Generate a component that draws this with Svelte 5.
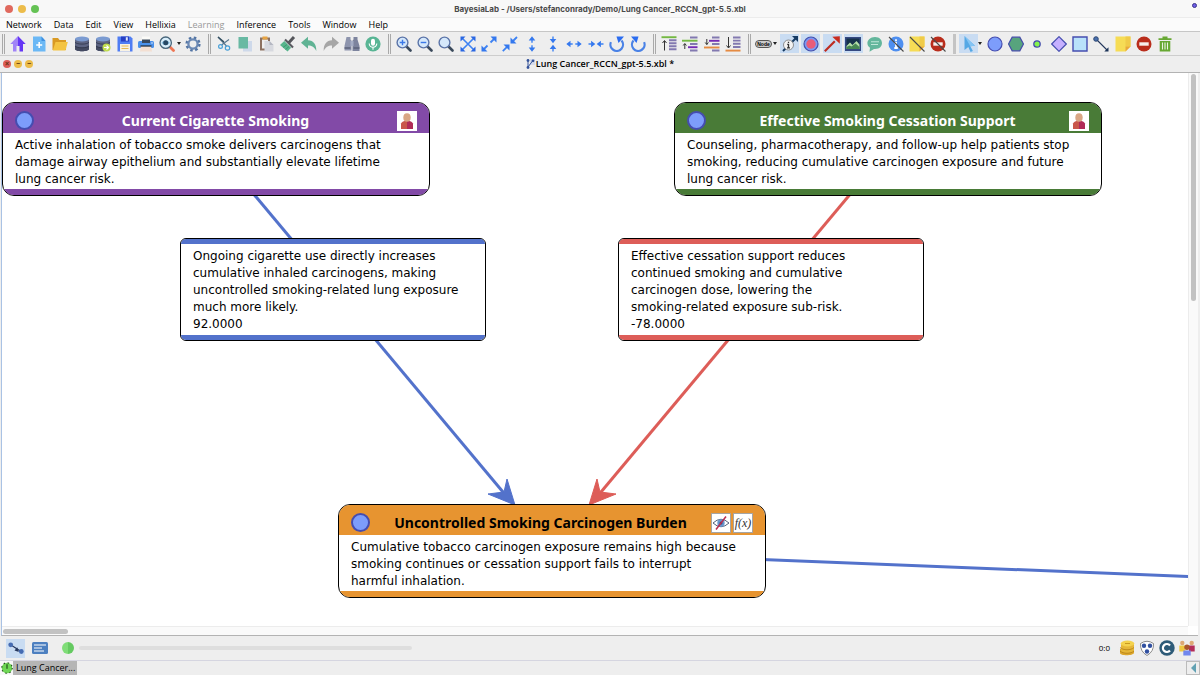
<script lang="ts">
  type Tool = { name: string; icon: string; active?: boolean; menu?: boolean };

  const menus = ['Network', 'Data', 'Edit', 'View', 'Hellixia', 'Learning', 'Inference', 'Tools', 'Window', 'Help'];

  const glass = '<path d="M10.5 10.5l4 4" stroke="#3b4a5c" stroke-width="2.6" stroke-linecap="round"/><circle cx="6.5" cy="6.5" r="5.4" fill="#d5e8fb" stroke="#5b74a8" stroke-width="1.4"/>';
  const database = '<path d="M1 3v10c0 3 14 3 14 0V3z" fill="#5d6482"/><path d="M1 9.500c2 2.500 12 2.500 14 0V13c0 3-14 3-14 0z" fill="#444a61"/><path d="M1 6.300c2 2.400 12 2.400 14 0M1 10c2 2.400 12 2.400 14 0" fill="none" stroke="#2f3549" stroke-width=".8"/><ellipse cx="8" cy="3" rx="7" ry="2.500" fill="#7b9bd1"/>';
  const stop = '<circle cx="8" cy="8" r="7.500" fill="#b92d1c"/><rect x="3.300" y="6.300" width="9.400" height="3.400" fill="#f6efec"/>';
  const note = '<path d="M.5.5h15v10l-5 5H.5z" fill="#f6dc55"/><path d="M10.500.5h5v10h-5z" fill="#f0cb48"/><path d="M10.500 15.500v-5h5z" fill="#e9a83a"/>';
  const slash = '<path d="M1 1l14.500 14.500" stroke="#4b4b4b" stroke-width="1.100"/>';

  const icons: Record<string, string> = {
    home: '<path d="M8 0L.3 8H3v7.500h3.500V10H8z" fill="#a184f7"/><path d="M8 0l7.700 8H13v7.500H9.500V10H8z" fill="#6536f5"/>',
    create: '<path d="M2 .5h8.500L14.500 5v10.500H2z" fill="#6bb8f5"/><path d="M10.500.5L14.500 5h-4z" fill="#3e8fe0"/><path d="M8.200 6v6M5.200 9h6" stroke="#fff" stroke-width="1.600"/>',
    open: '<path d="M.5 2h5.500l1.500 2H14v10H.5z" fill="#d99a24"/><path d="M3.500 6h12.300L13.500 14.500H.8z" fill="#f4c442"/>',
    database,
    databaseLink: database + '<circle cx="11.500" cy="11.500" r="4" fill="#c0dc4e"/><path d="M9 11.500h4M11.500 9.500l2 2-2 2" stroke="#fff" stroke-width="1.200" fill="none"/>',
    save: '<path d="M.5.5h13l2 2v13H.5z" fill="#4f7df3"/><path d="M4 .5h8v5H4z" fill="#263fc4"/><path d="M8.800 1.200h2v3.500h-2z" fill="#dfe7fc"/><path d="M3 8h10v7.500H3z" fill="#f8f2e4"/><path d="M4.500 10h7M4.500 12.500h7" stroke="#e7ba54" stroke-width="1.100"/>',
    print: '<path d="M4 .5h8v4H4z" fill="#fbfbf8"/><rect y="5" width="16" height="7" rx="1.500" fill="#4b91ea"/><path d="M4 3.500h8V7H4z" fill="#39485d"/><path d="M3 10h10l1 5.500H2z" fill="#f3dfd2"/><path d="M2.500 10h11" stroke="#26313e" stroke-width="1.300"/><circle cx="14" cy="7" r=".7" fill="#fff"/>',
    inspect: '<path d="M10.500 10.500l4 4" stroke="#ee7654" stroke-width="2.800" stroke-linecap="round"/><circle cx="6.700" cy="6.700" r="5.700" fill="#d8edfa" stroke="#47657a" stroke-width="1.300"/><path d="M2.500 6.700q4.200-5 8.400 0-4.200 5-8.400 0z" fill="#85bddf"/><circle cx="6.700" cy="6.700" r="2.500" fill="#264864"/>',
    gear: '<circle cx="8" cy="8" r="6.300" fill="none" stroke="#5375a4" stroke-width="2.600" stroke-dasharray="2.500 2.450"/><circle cx="8" cy="8" r="4.600" fill="#eee" stroke="#6b89b4" stroke-width="2.300"/>',
    cut: '<path d="M2 1l8.500 9M13 3.500L5.500 9" stroke="#55758e" stroke-width="1.100"/><path d="M2 1l6 5" stroke="#344f60" stroke-width="1.400"/><circle cx="4.500" cy="10.500" r="1.900" fill="none" stroke="#48a0d8" stroke-width="1.200"/><circle cx="11.500" cy="12" r="2.200" fill="none" stroke="#48a0d8" stroke-width="1.200"/>',
    copy: '<path d="M6 5h9v10.500H6z" fill="#ced9ea"/><path d="M1.500 1h9.500v11.500H1.500z" fill="#68b9a3"/>',
    paste: '<path d="M2 1.500h10v13H2z" fill="#8c7160"/><path d="M4 3.500h6v9H4z" fill="#efefef"/><path d="M4.500.5h5v3h-5z" fill="#e7a443"/><path d="M6.500 5h5l4 4v6.500h-9z" fill="#d7d9df"/><path d="M11.500 5l4 4h-4z" fill="#b4b7c2"/>',
    brush: '<path d="M8.500 7L14 1" stroke="#55565b" stroke-width="3"/><path d="M5 3.500l8 8" stroke="#595a60" stroke-width="2.200"/><path d="M4.300 5l6.800 6.800L7.500 15.500 0 9z" fill="#57b58c"/><path d="M3 11.500l4-3M5.500 13.500l3.500-3" stroke="#328b66" stroke-width=".7"/>',
    undo: '<path d="M0 6.700L7 .8v3.500c5.500.2 8.500 4 8.300 10.700C13.300 11 11 9.500 7 9.500v3.300z" fill="#60b394"/>',
    redo: '<path d="M16 6.700L9 .8v3.500C3.500 4.500.5 8.300.7 15 2.700 11 5 9.500 9 9.500v3.300z" fill="#a6a6a6"/>',
    find: '<path d="M2.500 1h4v2.500l1 1v10h-7V10z" fill="#8d94ad"/><path d="M9.500 1h4v2.500l2 6.500v5h-7V4.500l1-1z" fill="#7d849e"/><path d="M.5 12h6M9.500 12h6" stroke="#5b617a" stroke-width="1.400"/><path d="M6.500 5h3v5h-3z" fill="#a5adc5"/>',
    mic: '<circle cx="8" cy="8" r="7.600" fill="#58b594"/><rect x="6" y="2.700" width="4" height="7" rx="2" fill="#fff"/><path d="M4.200 7.500c0 5 7.600 5 7.600 0M8 11.500v2.300" stroke="#fff" fill="none" stroke-width="1.100"/>',
    zoomIn: glass + '<path d="M6.500 3.700v5.600M3.700 6.500h5.600" stroke="#3a78e8" stroke-width="1.400"/>',
    zoomOut: glass + '<path d="M3.700 6.500h5.600" stroke="#3a78e8" stroke-width="1.400"/>',
    zoom: glass,
    fit: '<path d="M2 2l12 12M14 2L2 14" stroke="#3d82f3" stroke-width="1.600"/><path d="M.5.5h5l-5 5zM15.500.5v5l-5-5zM.5 15.500v-5l5 5zM15.500 15.500h-5l5-5z" fill="#2a67e2"/>',
    expand: '<path d="M2.500 13.500l4-4M9.500 6.500l4-4" stroke="#3d82f3" stroke-width="1.800"/><path d="M15.500.5v6l-6-6zM.5 15.500v-6l6 6z" fill="#3478ee"/>',
    shrink: '<path d="M.8 15.200l5-5M10 6l5-5" stroke="#3d82f3" stroke-width="1.800"/><path d="M7.500 8.500v6l-6-6zM8.500 7.500v-6l6 6z" fill="#3478ee"/>',
    taller: '<path d="M8 3v3.700M8 9.300V13" stroke="#3d82f3" stroke-width="1.400"/><path d="M8 .3l3.300 4.200H4.700zM8 15.700l3.300-4.200H4.700z" fill="#3478ee"/>',
    shorter: '<path d="M8 .5v3M8 12.500v3" stroke="#3d82f3" stroke-width="1.400"/><path d="M8 7.300l3.300-4.200H4.700zM8 8.700l3.300 4.200H4.700z" fill="#3478ee"/>',
    wider: '<path d="M3 8h3.700M9.300 8H13" stroke="#3d82f3" stroke-width="1.400"/><path d="M.3 8l4.200-3.300v6.600zM15.700 8l-4.200-3.300v6.600z" fill="#3478ee"/>',
    narrower: '<path d="M.5 8h3M12.500 8h3" stroke="#3d82f3" stroke-width="1.400"/><path d="M7.300 8L3.100 4.700v6.600zM8.700 8l4.200-3.300v6.600z" fill="#3478ee"/>',
    rotateLeft: '<path d="M1.900 6.200a6.300 6.300 0 1 0 10.600-1.700" fill="none" stroke="#4a82e6" stroke-width="2.200"/><path d="M7.500.5H15l-5.500 6.500z" fill="#2a6cf0"/>',
    rotateRight: '<path d="M14.100 6.200A6.300 6.300 0 1 1 3.500 4.500" fill="none" stroke="#4a82e6" stroke-width="2.200"/><path d="M8.500.5H1l5.500 6.500z" fill="#2a6cf0"/>',
    layerTop: '<path d="M.5 1.200h15" stroke="#74b843" stroke-width="1.900"/><path d="M8 4.200h7.500M8 7.200h7.500M8 10.200h7.500M8 13.200h7.500" stroke="#8279b0" stroke-width="1.900"/><path d="M3.500 14.500V5M1.500 7l2-2.500 2 2.500" stroke="#333" fill="none"/>',
    layerUp: '<path d="M0 4.700h15.500" stroke="#74b843" stroke-width="1.900"/><path d="M8 1.500h7.500M8 8h7.500M8 14.500h7.500" stroke="#8279b0" stroke-width="1.900"/><path d="M6 11.200h9.500" stroke="#742bb4" stroke-width="1.900"/><path d="M2.800 13V8M1.200 9.500L2.800 7.500l1.600 2" stroke="#333" fill="none"/>',
    layerDown: '<path d="M0 11.500h15.500" stroke="#e58b43" stroke-width="1.900"/><path d="M8 1.500h7.500M8 8h7.500M8 14.500h7.500" stroke="#8279b0" stroke-width="1.900"/><path d="M5 4.800h10.500" stroke="#742bb4" stroke-width="1.900"/><path d="M2.800 3v5.500M1.200 6.500l1.600 2 1.600-2" stroke="#333" fill="none"/>',
    layerBottom: '<path d="M.5 14.600h15" stroke="#e58b43" stroke-width="1.900"/><path d="M8 1.500h7.500M8 4.600h7.500M8 7.800h7.500M8 11h7.500" stroke="#8279b0" stroke-width="1.900"/><path d="M3.500 1v10.500M1.500 9.500l2 2.500 2-2.500" stroke="#333" fill="none"/>',
    arcInfo: '<path d="M9 7l5-5M1 15l3-3" stroke="#163b64" stroke-width="2"/><path d="M16 0v6l-6-6z" fill="#163b64"/><circle cx="6.500" cy="9" r="5" fill="#f3f3f3" stroke="#777" stroke-width=".8"/><path d="M6.500 5.700v1.400M5.200 8.300h1.300v3.500M5 11.800h3" stroke="#333" stroke-width="1.300" fill="none"/>',
    target: '<circle cx="8" cy="8" r="7" fill="#7a98f4" stroke="#444faa" stroke-width="1.200"/><circle cx="8" cy="8" r="4.700" fill="#e85c79"/>',
    arc: '<path d="M.8 15.200l10-10" stroke="#bd2d22" stroke-width="2.200"/><path d="M15.800.2v7.500L8.300.8z" fill="#c92c20"/>',
    image: '<path d="M0 1h16v14H0z" fill="#354981"/><path d="M1.500 2.500h13v10.500h-13z" fill="#16324c"/><path d="M1.500 13V10L5 6.500l2.500 2.500 4-4 3 3.500V13z" fill="#b4dea7"/><path d="M1.500 13v-2l3-1.500 2 1 4-3 4 3.500v2z" fill="#478653"/>',
    comment: '<path d="M8 1c9.300 0 9.300 12 0 12H7l-4.500 2.700.5-4C-2 8.500.5 1 8 1z" fill="#63b69c"/><path d="M4 5.700h8M4 8.500h7" stroke="#bfe6d8" stroke-width="1.100"/>',
    hideInfo: '<circle cx="8" cy="8" r="7.500" fill="#4e8ff0"/><path d="M8 3.300v2M6.500 7H8v5M6.300 12h3.500" stroke="#fff" stroke-width="1.800" fill="none"/>' + slash,
    hideNote: note + slash,
    hideStop: stop + slash,
    pointer: '<path d="M3.500 0L14 9.800l-4.700.5 2.600 4.600-2.300 1-2.300-4.800-3.800 3z" fill="#55a8e5"/><path d="M3.500 0L14 9.800l-4.700.5z" fill="#83c4f4"/>',
    circle: '<circle cx="8" cy="8" r="7" fill="#7d9dfb" stroke="#454db0" stroke-width="1.200"/>',
    hexagon: '<path d="M4.200 1.200h7.600L15.500 8l-3.700 6.800H4.200L.5 8z" fill="#57a47d" stroke="#444ca8" stroke-width="1.200"/>',
    dot: '<circle cx="8" cy="8" r="3.200" fill="#86f34d" stroke="#454db0" stroke-width="1.300"/>',
    diamond: '<path d="M8 .7L15.300 8 8 15.300.7 8z" fill="#c6b0ff" stroke="#454db0" stroke-width="1.200"/>',
    square: '<path d="M1 1h14v14H1z" fill="#b9e2fa" stroke="#454db0" stroke-width="1.400"/>',
    link: '<path d="M3.500 3.500L14 14" stroke="#24375c" stroke-width="1.100"/><circle cx="3" cy="3" r="2.300" fill="#4a71ae" stroke="#26416c" stroke-width=".9"/><path d="M15.500 15.500h-4.200l4.200-4.200z" fill="#1c3458"/>',
    note,
    stop,
    trash: '<path d="M2.700 5h10.600v10.500H2.700z" fill="#67a833"/><path d="M1.500 2.200h13V4h-13zM5.500.5h5v2h-5z" fill="#67a833"/><path d="M5.500 6.500v7M8 6.500v7M10.500 6.500v7" stroke="#eaf3e2" stroke-width="1.100"/>',
    graph: '<path d="M3 5l10 6.500" stroke="#26385f" stroke-width="1.200"/><path d="M10.800 12L6.500 10.500l2.700-3.300z" fill="#26385f"/><circle cx="2.700" cy="4.800" r="2.400" fill="#466cb2"/><circle cx="13.300" cy="11.500" r="2.400" fill="#466cb2"/>',
    report: '<rect y="2" width="16" height="12" rx="1.500" fill="#4d80c0"/><path d="M2 5h12M2 8h8M2 11h10" stroke="#fff" stroke-width="1.200"/>',
    coins: '<path d="M1 9v4c0 3 13 3 14 0V9z" fill="#dca72e"/><path d="M2 4v7c2 3 11 3 13 0V4z" fill="#e5b638"/><path d="M1 7.500c3 3 11 3 14 0M1 11c3 3 11 3 14 0" fill="none" stroke="#b98518" stroke-width=".9"/><ellipse cx="8.500" cy="3.500" rx="6.800" ry="3" fill="#f4d24e"/><path d="M6 3.500h5" stroke="#c99820"/>',
    mask: '<path d="M1.500 3.500Q8-1 14.500 3.500q.5 8-6.500 12-7-4-6.500-12z" fill="#fff" stroke="#8a8a8a"/><circle cx="5" cy="5.800" r="2.200" fill="#3150a0"/><circle cx="11" cy="5.800" r="2.200" fill="#3150a0"/><circle cx="8" cy="11.500" r="2.200" fill="#3150a0"/>',
    copyright: '<circle cx="8" cy="8" r="7.700" fill="#2e5b78"/><path d="M11 5.500a4 4 0 1 0 0 5" fill="none" stroke="#fff" stroke-width="2.200"/>',
    people: '<circle cx="3.300" cy="3" r="2.200" fill="#dda875"/><circle cx="12.700" cy="3" r="2.200" fill="#dda875"/><path d="M.3 5.500h6v6h-6z" fill="#efc840"/><path d="M10 5.500h5.700v6H10z" fill="#b32c59"/><circle cx="8" cy="7.300" r="2.700" fill="#a9572e"/><path d="M4.300 10.500h7.400v5H4.300z" fill="#7187ee"/>',
    wheel: '<circle cx="8" cy="8" r="7" fill="#6ed655" stroke="#234f1c" stroke-width="1.500" stroke-dasharray="2 3.500"/><path d="M8 3v6" stroke="#173c14" stroke-width="1.400"/>',
    person: '<path d="M2 16V10.500Q3 8 8 7.500v8.500z" fill="#c9574a"/><path d="M8 7.500q5 .5 6 3V16H8z" fill="#b02b57"/><ellipse cx="8" cy="4.500" rx="3.700" ry="4.300" fill="#d9a684"/>',
    hidden: '<path d="M0 8Q8 .5 16 8 8 15.500 0 8z" fill="#fff" stroke="#53617c"/><circle cx="8" cy="8" r="3.700" fill="#6596cf"/><circle cx="8" cy="8" r="1.500" fill="#354867"/><path d="M3 14.500L13 1.500" stroke="#bc2c50" stroke-width="1.500"/>'
  };

  const groups: { id: string; tools: Tool[] }[] = [
    {
      id: 'file',
      tools: [
        { name: 'Home', icon: 'home' },
        { name: 'New', icon: 'create' },
        { name: 'Open', icon: 'open' },
        { name: 'Open data source', icon: 'database' },
        { name: 'Associate data source', icon: 'databaseLink' },
        { name: 'Save', icon: 'save' },
        { name: 'Print', icon: 'print' },
        { name: 'Inspect', icon: 'inspect', menu: true },
        { name: 'Settings', icon: 'gear' }
      ]
    },
    {
      id: 'edit',
      tools: [
        { name: 'Cut', icon: 'cut' },
        { name: 'Copy', icon: 'copy' },
        { name: 'Paste', icon: 'paste' },
        { name: 'Copy format', icon: 'brush' },
        { name: 'Undo', icon: 'undo' },
        { name: 'Redo', icon: 'redo' },
        { name: 'Find', icon: 'find' },
        { name: 'Dictate', icon: 'mic' }
      ]
    },
    {
      id: 'view',
      tools: [
        { name: 'Zoom in', icon: 'zoomIn' },
        { name: 'Zoom out', icon: 'zoomOut' },
        { name: 'Default zoom', icon: 'zoom' },
        { name: 'Best fit', icon: 'fit' },
        { name: 'Stretch', icon: 'expand' },
        { name: 'Shrink', icon: 'shrink' },
        { name: 'Stretch vertically', icon: 'taller' },
        { name: 'Shrink vertically', icon: 'shorter' },
        { name: 'Stretch horizontally', icon: 'wider' },
        { name: 'Shrink horizontally', icon: 'narrower' },
        { name: 'Rotate left', icon: 'rotateLeft' },
        { name: 'Rotate right', icon: 'rotateRight' }
      ]
    },
    {
      id: 'layers',
      tools: [
        { name: 'Bring to front', icon: 'layerTop' },
        { name: 'Bring forward', icon: 'layerUp' },
        { name: 'Send backward', icon: 'layerDown' },
        { name: 'Send to back', icon: 'layerBottom' }
      ]
    },
    {
      id: 'display',
      tools: [
        { name: 'Node style', icon: 'node', menu: true },
        { name: 'Arc information', icon: 'arcInfo', active: true },
        { name: 'Target node', icon: 'target', active: true },
        { name: 'Arc colors', icon: 'arc', active: true },
        { name: 'Images', icon: 'image', active: true },
        { name: 'Comments', icon: 'comment' },
        { name: 'Hide information', icon: 'hideInfo' },
        { name: 'Hide notes', icon: 'hideNote' },
        { name: 'Hide forbidden arcs', icon: 'hideStop' }
      ]
    },
    {
      id: 'draw',
      tools: [
        { name: 'Select', icon: 'pointer', active: true, menu: true },
        { name: 'Node', icon: 'circle' },
        { name: 'Constraint', icon: 'hexagon' },
        { name: 'Function', icon: 'dot' },
        { name: 'Decision', icon: 'diamond' },
        { name: 'Utility', icon: 'square' },
        { name: 'Arc', icon: 'link' },
        { name: 'Note', icon: 'note' },
        { name: 'Forbidden arc', icon: 'stop' },
        { name: 'Delete', icon: 'trash' }
      ]
    }
  ];

  // positions on the graph canvas
  const nodes = [
    {
      x: 0,
      y: 29,
      color: 'purple',
      title: 'Current Cigarette Smoking',
      badges: ['person'],
      text: 'Active inhalation of tobacco smoke delivers carcinogens that\ndamage airway epithelium and substantially elevate lifetime\nlung cancer risk.'
    },
    {
      x: 672,
      y: 29,
      color: 'green',
      title: 'Effective Smoking Cessation Support',
      badges: ['person'],
      text: 'Counseling, pharmacotherapy, and follow-up help patients stop\nsmoking, reducing cumulative carcinogen exposure and future\nlung cancer risk.'
    },
    {
      x: 336,
      y: 431,
      color: 'orange',
      title: 'Uncontrolled Smoking Carcinogen Burden',
      badges: ['hidden', 'fx'],
      text: 'Cumulative tobacco carcinogen exposure remains high because\nsmoking continues or cessation support fails to interrupt\nharmful inhalation.'
    }
  ];

  const effects = [
    {
      x: 178,
      y: 165,
      color: 'blue',
      text: 'Ongoing cigarette use directly increases\ncumulative inhaled carcinogens, making\nuncontrolled smoking-related lung exposure\nmuch more likely.\n92.0000'
    },
    {
      x: 616,
      y: 165,
      color: 'red',
      text: 'Effective cessation support reduces\ncontinued smoking and cumulative\ncarcinogen dose, lowering the\nsmoking-related exposure sub-risk.\n-78.0000'
    }
  ];

  const file = 'Lung Cancer_RCCN_gpt-5.5.xbl';
</script>

{#snippet icon(name: string)}
  <svg class="icon" viewBox="0 0 16 16" aria-hidden="true">{@html icons[name]}</svg>
{/snippet}

<div class="window">
  <header class="titlebar">
    <div class="lights">
      <button class="red" aria-label="Close"></button>
      <button class="yellow" aria-label="Minimize"></button>
      <button class="green" aria-label="Zoom"></button>
    </div>
    <h1>BayesiaLab - /Users/stefanconrady/Demo/{file}</h1>
    <span class="indicator"></span>
  </header>

  <nav class="menubar">
    {#each menus as menu}
      <button disabled={menu === 'Learning'}>{menu}</button>
    {/each}
  </nav>

  <div class="toolbar" role="toolbar" aria-label="Main tools">
    {#each groups as group}
      <span class="grip" class:solid={group.id === 'draw'}></span>
      <div class="group {group.id}">
        {#each group.tools as tool}
          <button class="tool" class:menu={tool.menu} aria-label={tool.name} aria-pressed={tool.active}>
            <span class="face" class:active={tool.active}>
              {#if tool.icon === 'node'}
                <span class="pill">Node</span>
              {:else}
                {@render icon(tool.icon)}
              {/if}
            </span>
            {#if tool.menu}<span class="caret"></span>{/if}
          </button>
        {/each}
      </div>
    {/each}
  </div>

  <div class="document-bar">
    <div class="doc-controls">
      <button class="red" aria-label="Close document">×</button>
      <button class="yellow" aria-label="Minimize document">−</button>
      <button class="yellow" aria-label="Restore document">−</button>
    </div>
    <h2>
      <svg class="doc-icon" viewBox="0 0 9 10" aria-hidden="true">
        <path d="M4 0h5v6H4z" fill="#d6dcec" />
        <path d="M2 2v6M2 8l4.500-6" stroke="#34539a" fill="none" />
        <circle cx="2" cy="1.500" r="1.400" fill="#34539a" />
        <circle cx="2" cy="8.500" r="1.400" fill="#34539a" />
        <circle cx="7" cy="1.800" r="1.400" fill="#34539a" />
      </svg>
      {file} *
    </h2>
  </div>

  <main class="workspace">
    <div class="canvas">
      <svg class="arcs" aria-hidden="true">
        <path d="M214 76L506 425" stroke="#5372cb" stroke-width="3" />
        <path d="M513 432l-27-11 16-2 3-13z" fill="#5372cb" stroke="#5372cb" />
        <path d="M886 76L594 425" stroke="#dd5d58" stroke-width="3" />
        <path d="M587 432l8-26 3 13 16 2z" fill="#dd5d58" stroke="#dd5d58" />
        <path d="M550 478L1200 504" stroke="#5372cb" stroke-width="3" />
      </svg>

      {#each nodes as node}
        <article class="node {node.color}" style="left: {node.x}px; top: {node.y}px">
          <header>
            <span class="state"></span>
            <h3>{node.title}</h3>
            {#each node.badges as badge}
              <span class="badge {badge}">
                {#if badge === 'fx'}<i>f(x)</i>{:else}{@render icon(badge)}{/if}
              </span>
            {/each}
          </header>
          <p>{node.text}</p>
        </article>
      {/each}

      {#each effects as effect}
        <article class="effect {effect.color}" style="left: {effect.x}px; top: {effect.y}px">
          <p>{effect.text}</p>
        </article>
      {/each}
    </div>
    <div class="scroll-y"><span></span></div>
    <div class="scroll-x"><span></span></div>
  </main>

  <div class="statusbar">
    <button class="face active" aria-label="Graph mode">{@render icon('graph')}</button>
    <button class="face" aria-label="Report mode">{@render icon('report')}</button>
    <span class="ready"></span>
    <progress value="0" max="100" aria-label="Progress"></progress>
    <span class="counter">0:0</span>
    <div class="indicators">
      {@render icon('coins')}
      {@render icon('mask')}
      {@render icon('copyright')}
      {@render icon('people')}
    </div>
  </div>

  <footer class="taskbar">
    <span class="engine">{@render icon('wheel')}</span>
    <button class="task">Lung Cancer...</button>
    <button class="back" aria-label="Show panel"></button>
  </footer>
</div>

<style>
  :global(body) {
    margin: 0;
  }
  .window {
    height: 100vh;
    display: flex;
    flex-direction: column;
    overflow: hidden;
    background: #eee;
    color: #000;
    font: 500 9px/12px 'Open Sans', sans-serif;
  }
  button {
    margin: 0;
    padding: 0;
    border: 0;
    background: none;
    color: inherit;
    font: inherit;
  }
  h1,
  h2,
  h3,
  p {
    margin: 0;
    font: inherit;
  }
  .icon {
    display: block;
    width: 16px;
    height: 16px;
    flex: none;
  }
  .red {
    --fill: #dd5d58;
  }
  .yellow {
    --fill: #ecbc4a;
  }

  .titlebar {
    height: 17px;
    flex: none;
    display: grid;
    grid-template-columns: 1fr auto 1fr;
    align-items: center;
    background: #f8f8f8;
    border-bottom: 1px solid #ececec;
    h1 {
      color: #4a4a4a;
      font: bold 8px/12px Inter, sans-serif;
    }
  }
  .lights {
    display: flex;
    gap: 5px;
    padding-left: 5px;
    button {
      width: 8px;
      height: 8px;
      border-radius: 50%;
      background: var(--fill);
    }
    .red {
      --fill: #e0695e;
    }
    .green {
      --fill: #65c254;
    }
  }
  .indicator {
    justify-self: end;
    align-self: start;
    width: 3px;
    height: 3px;
    margin: 3px 3px 0 0;
    border-radius: 50%;
    border: 1px solid #3a3488;
    background: #6c5be8;
  }

  .menubar {
    height: 13px;
    flex: none;
    display: flex;
    align-items: center;
    gap: 12px;
    padding-left: 6px;
    background: #fbfbfb;
    border-bottom: 1px solid #c6c6c6;
    button:disabled {
      color: #999;
    }
  }

  .toolbar {
    height: 23px;
    flex: none;
    display: flex;
    align-items: center;
    border-bottom: 1px solid #cdcdcd;
  }
  .grip {
    width: 1px;
    height: 20px;
    flex: none;
    margin: 0 2px 0 4px;
    border: solid #a9a9a9;
    border-width: 0 1px;
    &:first-child {
      margin-left: 2px;
    }
    &.solid {
      border-color: #c4c4c4;
      background: #c4c4c4;
    }
  }
  .group {
    display: flex;
    flex: none;
  }
  .file {
    width: 197px;
  }
  .edit {
    width: 171px;
  }
  .view {
    width: 256px;
  }
  .layers {
    width: 86px;
  }
  .display {
    width: 196px;
  }
  .draw {
    width: 218px;
  }
  .tool {
    flex: 1;
    display: flex;
    align-items: center;
    justify-content: center;
    &.menu {
      flex: 0 0 26px;
      justify-content: flex-start;
      padding-left: 1px;
    }
  }
  .face {
    width: 19px;
    height: 19px;
    flex: none;
    display: flex;
    align-items: center;
    justify-content: center;
    &.active {
      background: #c9dcf2;
    }
  }
  .caret {
    border: 2px solid transparent;
    border-top: 3px solid #222;
    border-bottom: 0;
  }
  .pill {
    border: 1px solid #555;
    border-radius: 4px;
    background: #ccc;
    padding: 0 1px;
    font: bold 5px/6px 'Liberation Sans', sans-serif;
  }

  .document-bar {
    height: 16px;
    flex: none;
    display: grid;
    grid-template-columns: 1fr auto 1fr;
    align-items: center;
    border-bottom: 1px solid #b3b3b3;
    h2 {
      display: flex;
      align-items: center;
      gap: 1px;
      font-weight: 600;
    }
  }
  .doc-icon {
    width: 9px;
    height: 10px;
  }
  .doc-controls {
    display: flex;
    gap: 3px;
    padding-left: 3px;
    button {
      width: 8px;
      height: 8px;
      display: flex;
      align-items: center;
      justify-content: center;
      border-radius: 50%;
      background: var(--fill);
      font: bold 7px/8px 'Liberation Sans', sans-serif;
      color: #5c3210;
    }
  }

  .workspace {
    flex: 1;
    min-height: 0;
    display: grid;
    grid-template: 1fr 9px / 1fr 10px;
    margin: 0 2px 0 1px;
    border-left: 1px solid #a9c2e4;
    border-bottom: 1px solid #b3b3b3;
    background: #fff;
  }
  .canvas {
    position: relative;
    overflow: hidden;
  }
  .arcs {
    position: absolute;
    inset: 0;
    width: 100%;
    height: 100%;
  }
  .scroll-y,
  .scroll-x {
    background: #fafafa;
    border: 0 solid #ececec;
    span {
      display: block;
      border-radius: 3px;
      background: #c2c2c2;
    }
  }
  .scroll-y {
    border-left-width: 1px;
    span {
      width: 5px;
      height: 41%;
      margin: 1px auto;
    }
  }
  .scroll-x {
    border-top-width: 1px;
    span {
      width: 65px;
      height: 5px;
      margin: 2px 1px;
    }
  }

  .node,
  .effect {
    position: absolute;
    box-sizing: border-box;
    overflow: hidden;
    border: 1px solid #000;
    background: #fff;
    color: #000;
    font: 12px/17px 'DejaVu Sans', sans-serif;
    p {
      white-space: pre;
    }
  }
  .node {
    width: 428px;
    border-radius: 12px;
    header {
      height: 25px;
      display: flex;
      align-items: center;
      gap: 2px;
      padding: 5px 12px 0;
      background: var(--fill);
    }
    h3 {
      flex: 1;
      text-align: center;
      font: bold 14px/20px 'Noto Sans', sans-serif;
    }
    p {
      padding: 4px 12px 1px;
      border-bottom: 6px solid var(--fill);
    }
    &.purple {
      --fill: #824aa7;
    }
    &.green {
      --fill: #497b37;
    }
    &.orange {
      --fill: #e79430;
    }
    &.purple h3,
    &.green h3 {
      color: #fff;
    }
  }
  .state {
    width: 15px;
    height: 15px;
    border: 2px solid #454db0;
    border-radius: 50%;
    background: #7d9dfb;
  }
  .badge {
    width: 20px;
    height: 20px;
    box-sizing: border-box;
    display: flex;
    align-items: center;
    justify-content: center;
    background: #fff;
    color: #333;
    &.hidden,
    &.fx {
      border: 1px solid #a5a5a5;
    }
    i {
      font: italic 12px/16px 'Liberation Serif', serif;
    }
  }
  .effect {
    width: 306px;
    border-radius: 6px;
    p {
      padding: 4px 12px 2px;
      border: solid var(--fill);
      border-width: 5px 0;
    }
    &.blue {
      --fill: #5372cb;
    }
  }

  .statusbar {
    height: 24px;
    flex: none;
    display: flex;
    align-items: center;
    padding: 0 5px 0 6px;
    border-bottom: 1px solid #d5d5e0;
    .face + .face {
      margin-left: 5px;
    }
    progress {
      appearance: none;
      width: 333px;
      height: 4px;
      margin-left: 5px;
      border: 0;
      border-radius: 2px;
      overflow: hidden;
      background: #dedede;
    }
    progress::-webkit-progress-bar {
      background: #dedede;
    }
  }
  .ready {
    width: 12px;
    height: 12px;
    margin-left: 13px;
    border-radius: 50%;
    background: linear-gradient(90deg, #80dd78 50%, #65ca61 50%);
  }
  .counter {
    margin-left: auto;
    font: 8px/12px 'Open Sans', sans-serif;
  }
  .indicators {
    display: flex;
    gap: 4px;
    margin-left: 9px;
  }

  .taskbar {
    height: 14px;
    flex: none;
    display: flex;
    align-items: stretch;
    .engine {
      display: flex;
      align-items: center;
      width: 12px;
      padding-left: 1px;
      background: #f7f7f7;
    }
    .icon {
      width: 12px;
      height: 12px;
    }
  }
  .task {
    padding: 0 2px 0 3px;
    background: #b5b5b5;
    line-height: 14px;
  }
  .back {
    width: 14px;
    margin-left: auto;
    border: 1px solid #bbb;
    display: flex;
    align-items: center;
    justify-content: center;
    &::before {
      content: '';
      border: 5px solid transparent;
      border-right-color: #62a1b3;
      border-left: 0;
    }
  }
</style>
